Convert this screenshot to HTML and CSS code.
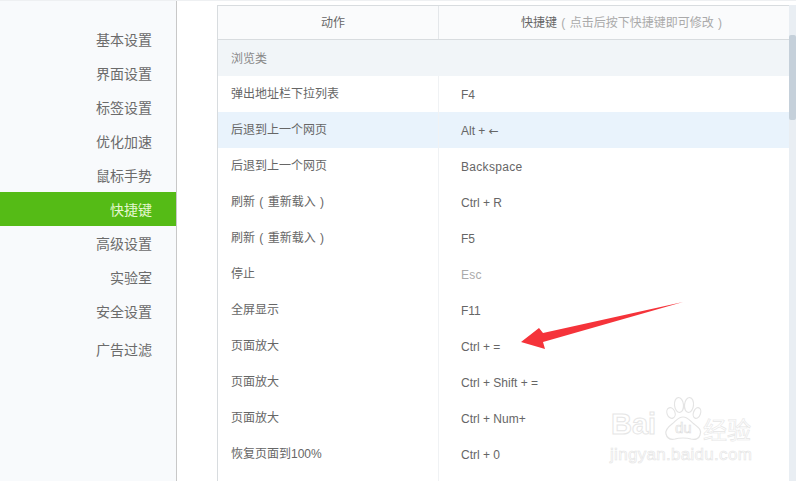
FILE: index.html
```html
<!DOCTYPE html>
<html lang="zh-CN">
<head>
    <meta charset="UTF-8">
    <meta name="viewport" content="width=device-width, initial-scale=1.0">
    <title>快捷键设置</title>
    <link rel="stylesheet" href="styles.css">
</head>
<body>
    <div class="page">
        <nav class="sidebar">
            <a class="nav-item">基本设置</a>
            <a class="nav-item">界面设置</a>
            <a class="nav-item">标签设置</a>
            <a class="nav-item">优化加速</a>
            <a class="nav-item">鼠标手势</a>
            <a class="nav-item active">快捷键</a>
            <a class="nav-item">高级设置</a>
            <a class="nav-item">实验室</a>
            <a class="nav-item">安全设置</a>
            <a class="nav-item nav-last">广告过滤</a>
        </nav>

        <main class="content">
            <table class="keys">
                <thead>
                    <tr>
                        <th class="col-action">动作</th>
                        <th>快捷键<span class="hint"> ( 点击后按下快捷键即可修改 )</span></th>
                    </tr>
                </thead>
                <tbody>
                    <tr class="group"><td colspan="2">浏览类</td></tr>
                    <tr><td>弹出地址栏下拉列表</td><td>F4</td></tr>
                    <tr class="hover"><td>后退到上一个网页</td><td>Alt + <span class="key-arrow">←</span></td></tr>
                    <tr><td>后退到上一个网页</td><td class="wide">Backspace</td></tr>
                    <tr><td class="spaced">刷新 ( 重新载入 )</td><td>Ctrl + R</td></tr>
                    <tr><td class="spaced">刷新 ( 重新载入 )</td><td>F5</td></tr>
                    <tr><td>停止</td><td class="muted wide">Esc</td></tr>
                    <tr><td>全屏显示</td><td>F11</td></tr>
                    <tr><td>页面放大</td><td>Ctrl + =</td></tr>
                    <tr><td>页面放大</td><td>Ctrl + Shift + =</td></tr>
                    <tr><td>页面放大</td><td>Ctrl + Num+</td></tr>
                    <tr><td>恢复页面到100%</td><td>Ctrl + 0</td></tr>
                    <tr><td></td><td></td></tr>
                </tbody>
            </table>
        </main>

        <div class="scrollbar"><div class="thumb"></div></div>
    </div>

    <!-- red arrow drawn over the screenshot -->
    <svg class="arrow" width="796" height="481" viewBox="0 0 796 481">
        <polygon points="521,342 539,328 543,333 683,302 543,342 545,349" fill="#f5333a"/>
    </svg>

    <!-- watermark -->
    <div class="watermark">
        <div class="wm-top">
            <span class="wm-bai">Bai</span>
            <svg class="wm-paw" width="46" height="50" viewBox="0 0 46 50">
                <g fill="#fff" stroke="#e4e4e4" stroke-width="1.2">
                    <ellipse cx="9" cy="18" rx="4" ry="5.5" transform="rotate(-20 9 18)"/>
                    <ellipse cx="17" cy="10" rx="4.5" ry="7.5" transform="rotate(-6 17 10)"/>
                    <ellipse cx="27" cy="10" rx="4.5" ry="7.5" transform="rotate(6 27 10)"/>
                    <ellipse cx="35" cy="18" rx="3.5" ry="5.5" transform="rotate(20 35 18)"/>
                    <path d="M21 22c5 0 7 4 11 7 5 4 8 6 6 11-1 4-5 5-9 4-3-1-5-1-8-1s-5 0-8 1c-5 1-8-1-9-5-1-4 2-7 6-10 4-3 6-7 11-7z"/>
                </g>
            </svg>
            <span class="wm-du">du</span>
            <span class="wm-cn">经验</span>
        </div>
        <div class="wm-url">jingyan.baidu.com</div>
    </div>
</body>
</html>
```

FILE: styles.css
```css
html, body {
    margin: 0;
    padding: 0;
    height: 100%;
    overflow: hidden;
    background: #fff;
}
body {
    font-family: "Liberation Sans", "Noto Sans CJK SC", sans-serif;
    color: #666;
}
.page {
    display: flex;
    height: 481px;
    border-top: 1px solid #eef0f2;
    box-sizing: border-box;
    overflow: hidden;
}
.sidebar {
    width: 176px;
    flex: none;
    padding-top: 21px;
    background: #f8fafc;
    border-right: 1px solid #c8c8c8;
}
.nav-item {
    display: block;
    box-sizing: border-box;
    height: 34px;
    padding: 2px 24px 0 0;
    line-height: 32px;
    text-align: right;
    font-size: 14px;
    color: #6b6b6b;
}
.nav-item.active {
    background: #55bb16;
    color: #e4f7cf;
}
.nav-last {
    margin-top: 4px;
}
.content {
    flex: 1;
    padding: 4px 0 0 40px;
    min-width: 0;
}
.keys {
    width: 587px;
    border-collapse: collapse;
    table-layout: fixed;
    border-left: 1px solid #d8dcdf;
    font-size: 12px;
}
.keys th,
.keys td {
    box-sizing: border-box;
}
.keys th {
    height: 34px;
    padding: 0 0 2px;
    font-weight: normal;
    color: #666;
    background: #fafbfc;
    border-top: 1px solid #d8dcdf;
    border-bottom: 1px solid #d8dcdf;
    border-left: 1px solid #e4e7ea;
    word-spacing: 1px;
}
.keys th.col-action {
    width: 221px;
    padding-left: 10px;
    border-left: 0;
}
.hint {
    color: #aaa;
}
.keys td {
    height: 36px;
    padding: 2px 0 0 22px;
    border-left: 1px solid #f0f2f4;
}
.keys td:first-child {
    padding: 0 0 2px 13px;
    border-left: 0;
}
.keys .group td {
    padding-bottom: 0;
    background: #f1f5f8;
    color: #888;
}
.keys .hover td {
    background: #e9f3fc;
}
.keys td.muted {
    color: #aaa;
}
.keys td.wide {
    letter-spacing: .3px;
}
.keys td.spaced {
    word-spacing: 1px;
}
.key-arrow {
    font-family: "DejaVu Sans", sans-serif;
}
.scrollbar {
    position: absolute;
    top: 5px;
    right: 0;
    bottom: 0;
    width: 7px;
    background: #e9eef3;
}
.thumb {
    height: 85px;
    margin-top: 30px;
    background: #c5d0da;
    border-radius: 2px;
}
.arrow {
    position: absolute;
    top: 0;
    left: 0;
    pointer-events: none;
}
.watermark {
    position: absolute;
    left: 610px;
    top: 395px;
    width: 160px;
    color: transparent;
    -webkit-text-stroke: 1px #e6e6e6;
}
.wm-top {
    position: relative;
    height: 50px;
}
.wm-bai {
    position: absolute;
    left: 1px;
    top: 13px;
    font-size: 29px;
    font-weight: bold;
}
.wm-paw {
    position: absolute;
    left: 52px;
    top: 0;
}
.wm-du {
    position: absolute;
    left: 65px;
    top: 24px;
    font-size: 15px;
    -webkit-text-stroke: .6px #dcdcdc;
}
.wm-cn {
    position: absolute;
    left: 93px;
    top: 16px;
    font-size: 24px;
    -webkit-text-stroke: .6px #e6e6e6;
}
.wm-url {
    margin-top: 0;
    font-size: 17px;
    letter-spacing: .3px;
    -webkit-text-stroke: .6px #e4e4e4;
}
```
